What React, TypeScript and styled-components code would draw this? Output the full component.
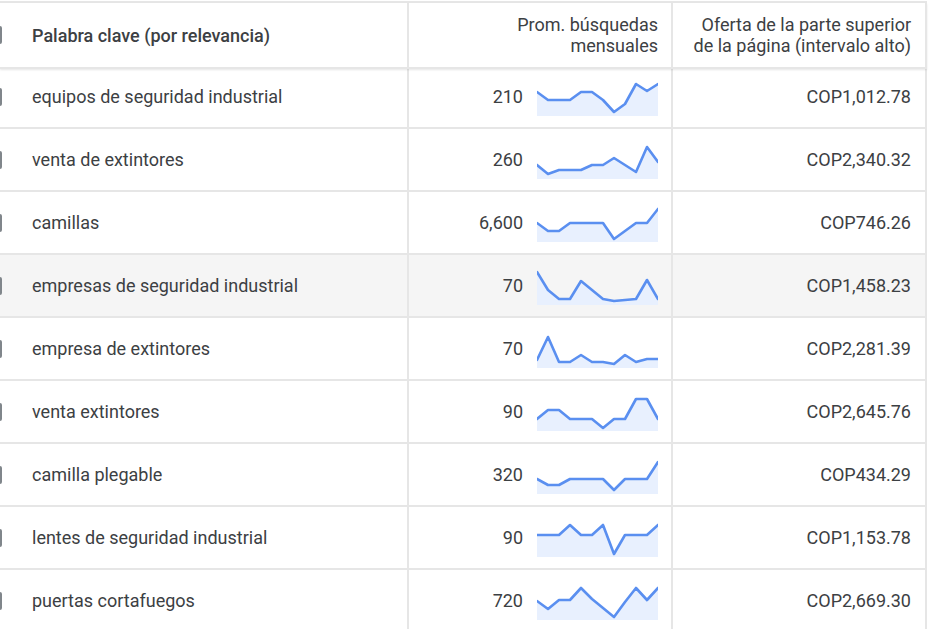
import styled, { createGlobalStyle } from "styled-components";

const GlobalStyle = createGlobalStyle`
  html, body {
    margin: 0;
    padding: 0;
    overflow: hidden;
    background: #ffffff;
  }
  body {
    font-family: Roboto, "Liberation Sans", Arial, sans-serif;
    color: #3c4043;
  }
`;

const Table = styled.div`
  margin-top: 1px;
  border-top: 2px solid #e6e6e6;
  width: 927px;
`;

const GridRow = styled.div<{ $highlight?: boolean }>`
  display: grid;
  grid-template-columns: 409px 264px 254px;
  height: 63px;
  box-sizing: border-box;
  border-bottom: 2px solid #e6e6e6;
  background-color: ${(p) => (p.$highlight ? "#f5f5f5" : "#ffffff")};
`;

const HeaderRow = styled(GridRow)`
  position: sticky;
  top: 0;
  z-index: 1;
  height: 66px;
  margin-bottom: -3px;
  box-shadow: 0 1px 2px rgba(0, 0, 0, 0.1);
`;

const Cell = styled.div<{ $align?: "left" | "right" }>`
  display: flex;
  align-items: center;
  justify-content: ${(p) => (p.$align === "right" ? "flex-end" : "flex-start")};
  box-sizing: border-box;
  border-right: 2px solid #e6e6e6;
  font-size: 18px;
  line-height: 21px;
  white-space: nowrap;
  overflow: hidden;
`;

const KeywordCell = styled(Cell)`
  gap: 30px;
`;

const TrendCell = styled(Cell)`
  gap: 14px;
  padding-right: 13px;
`;

const BidCell = styled(Cell)`
  padding-right: 14px;
`;

const Checkbox = styled.span`
  flex-shrink: 0;
  width: 18px;
  height: 18px;
  box-sizing: border-box;
  margin-left: -16px;
  border: 2px solid #80868b;
  border-radius: 2px;
`;

const HeaderLabel = styled.span<{ $bold?: boolean }>`
  font-weight: ${(p) => (p.$bold ? 500 : 400)};
  text-align: right;
  color: #3c4043;
`;

const SparkSvg = styled.svg`
  display: block;
  flex-shrink: 0;
  margin-top: 2px;
`;

type Row = {
  keyword: string;
  searches: string;
  bid: string;
  trend: number[];
};

const rows: Row[] = [
  { keyword: "equipos de seguridad industrial", searches: "210", bid: "COP1,012.78", trend: [12, 20, 20, 20, 12, 12, 20, 32, 24, 4, 11, 4] },
  { keyword: "venta de extintores", searches: "260", bid: "COP2,340.32", trend: [22, 31, 27, 27, 27, 22, 22, 15, 22, 29, 4, 19] },
  { keyword: "camillas", searches: "6,600", bid: "COP746.26", trend: [17, 25, 25, 17, 17, 17, 17, 33, 25, 17, 17, 3] },
  { keyword: "empresas de seguridad industrial", searches: "70", bid: "COP1,458.23", trend: [3, 21, 30, 30, 12, 21, 30, 32, 31, 30, 11, 30] },
  { keyword: "empresa de extintores", searches: "70", bid: "COP2,281.39", trend: [28, 5, 30, 30, 23, 30, 30, 32, 23, 30, 27, 27] },
  { keyword: "venta extintores", searches: "90", bid: "COP2,645.76", trend: [24, 15, 15, 24, 24, 24, 33, 24, 24, 4, 4, 24] },
  { keyword: "camilla plegable", searches: "320", bid: "COP434.29", trend: [21, 27, 27, 21, 21, 21, 21, 32, 21, 21, 21, 4] },
  { keyword: "lentes de seguridad industrial", searches: "90", bid: "COP1,153.78", trend: [14, 14, 14, 4, 14, 14, 4, 33, 14, 14, 14, 4] },
  { keyword: "puertas cortafuegos", searches: "720", bid: "COP2,669.30", trend: [17, 25, 16, 16, 4, 15, 24, 33, 18, 4, 16, 4] },
];

const Sparkline = ({ values }: { values: number[] }) => {
  const w = 121;
  const h = 36;
  const step = w / (values.length - 1);
  const pts = values.map((v, i) => `${(i * step).toFixed(1)},${v}`);
  const line = pts.join(" ");
  const area = `0,${h} ${line} ${w},${h}`;
  return (
    <SparkSvg width={w} height={h} viewBox={`0 0 ${w} ${h}`}>
      <polygon points={area} fill="#e8f0fe" />
      <polyline
        points={line}
        fill="none"
        stroke="#5a8ff0"
        strokeWidth={2.6}
        strokeLinejoin="round"
        strokeLinecap="round"
      />
    </SparkSvg>
  );
};

const App = () => {
  return (
    <>
      <GlobalStyle />
      <Table>
        <HeaderRow>
          <KeywordCell>
            <Checkbox />
            <HeaderLabel $bold>Palabra clave (por relevancia)</HeaderLabel>
          </KeywordCell>
          <TrendCell $align="right">
            <HeaderLabel>
              Prom. búsquedas
              <br />
              mensuales
            </HeaderLabel>
          </TrendCell>
          <BidCell $align="right">
            <HeaderLabel>
              Oferta de la parte superior
              <br />
              de la página (intervalo alto)
            </HeaderLabel>
          </BidCell>
        </HeaderRow>

        {rows.map((r, i) => (
          <GridRow key={r.keyword} $highlight={i === 3}>
            <KeywordCell>
              <Checkbox />
              <span>{r.keyword}</span>
            </KeywordCell>
            <TrendCell $align="right">
              <span>{r.searches}</span>
              <Sparkline values={r.trend} />
            </TrendCell>
            <BidCell $align="right">{r.bid}</BidCell>
          </GridRow>
        ))}
      </Table>
    </>
  );
};

export default App;
